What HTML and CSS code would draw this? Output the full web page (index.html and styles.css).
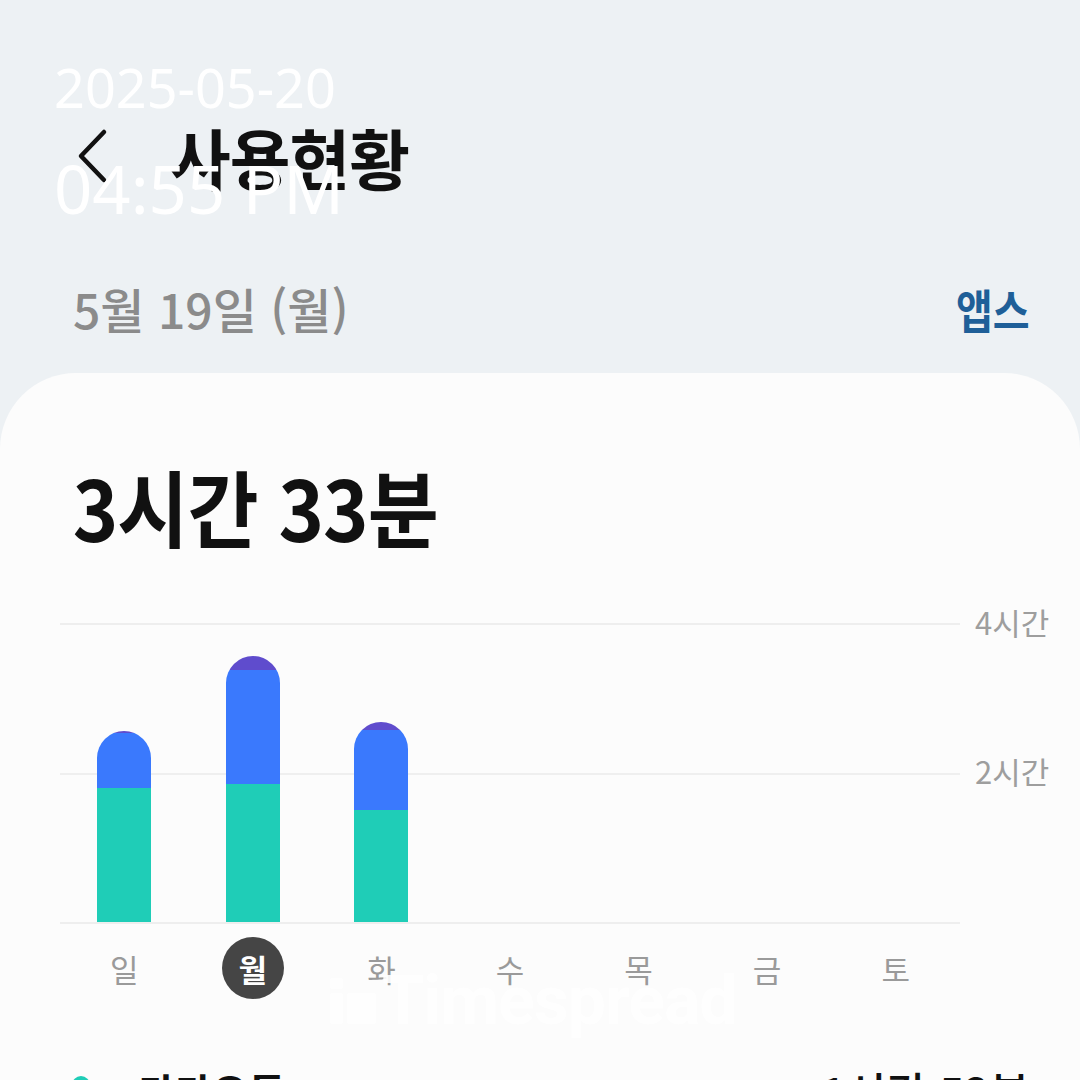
FILE: index.html
```html
<!DOCTYPE html>
<html lang="ko">
<head>
<meta charset="utf-8">
<title>사용현황</title>
<link rel="stylesheet" href="styles.css">
</head>
<body>
<div class="screen">
  <div class="stamp">
    <div class="stamp-date">2025-05-20</div>
    <div class="stamp-time">04:55 PM</div>
  </div>

  <header class="appbar">
    <svg class="back" width="34" height="56" viewBox="0 0 34 56">
      <path d="M28 4 L5 28 L28 52" fill="none" stroke="#111" stroke-width="4.5" stroke-linecap="round" stroke-linejoin="round"/>
    </svg>
    <h1 class="title">사용현황</h1>
  </header>

  <div class="dayline">
    <span class="day-date">5월 19일 (월)</span>
    <span class="apps">앱스</span>
  </div>

  <section class="card">
    <div class="total">3시간 33분</div>

    <div class="chart">
      <div class="plot">
        <div class="bars">
          <div class="col"><div class="bar">
            <div class="seg purple" style="height:2px"></div>
            <div class="seg blue" style="height:55px"></div>
            <div class="seg teal" style="height:134px"></div>
          </div></div>
          <div class="col"><div class="bar">
            <div class="seg purple" style="height:14px"></div>
            <div class="seg blue" style="height:114px"></div>
            <div class="seg teal" style="height:138px"></div>
          </div></div>
          <div class="col"><div class="bar">
            <div class="seg purple" style="height:8px"></div>
            <div class="seg blue" style="height:80px"></div>
            <div class="seg teal" style="height:112px"></div>
          </div></div>
          <div class="col"></div>
          <div class="col"></div>
          <div class="col"></div>
          <div class="col"></div>
        </div>
      </div>
      <div class="axis">
        <span class="tick top">4시간</span>
        <span class="tick mid">2시간</span>
      </div>
    </div>

    <div class="days">
      <span class="day">일</span>
      <span class="day"><span class="today">월</span></span>
      <span class="day">화</span>
      <span class="day">수</span>
      <span class="day">목</span>
      <span class="day">금</span>
      <span class="day">토</span>
    </div>

    <div class="watermark">
      <svg width="46" height="46" viewBox="0 0 46 46">
        <rect x="0" y="0" width="13" height="11" rx="2" fill="#fff"/>
        <rect x="0" y="15" width="13" height="31" rx="2" fill="#fff"/>
        <rect x="17" y="15" width="29" height="31" rx="2" fill="#fff"/>
      </svg>
      <span>Timespread</span>
    </div>

    <div class="app-row">
      <span class="dot"></span>
      <span class="app-name">카카오톡</span>
      <span class="app-time">1시간 52분</span>
    </div>
  </section>
</div>
</body>
</html>
```

FILE: styles.css
```css
html, body{
    margin: 0;
    padding: 0;
}
body{
    background: #edf1f4;
    font-family: "Noto Sans CJK KR", "Noto Sans", sans-serif;
    color: #111;
}
.screen{
    position: relative;
    width: 1080px;
    height: 1080px;
    overflow: hidden;
}

/* photo timestamp burned over the screenshot */
.stamp{
    position: absolute;
    top: 60px;
    left: 54px;
    z-index: 5;
    color: #fff;
    font-family: "Noto Sans", sans-serif;
    line-height: 1;
}
.stamp-date{
    font-size: 54px;
}
.stamp-time{
    margin-top: 41px;
    font-size: 67px;
}

.appbar{
    display: flex;
    align-items: center;
    padding: 118px 0 0 76px;
    height: 76px;
}
.back{
    display: block;
}
.title{
    margin: 0 0 0 60px;
    font-size: 66px;
    font-weight: 700;
    line-height: 1;
    letter-spacing: -1px;
}

.dayline{
    display: flex;
    justify-content: space-between;
    align-items: center;
    padding: 0 50px 0 73px;
    margin-top: 84px;
    height: 60px;
}
.day-date{
    font-size: 48px;
    font-weight: 500;
    color: #8b8b8b;
}
.apps{
    font-size: 46px;
    font-weight: 700;
    color: #1f5f98;
    transform: scaleX(.87);
    transform-origin: right center;
}

.card{
    position: relative;
    margin-top: 35px;
    height: 760px;
    background: #fcfcfc;
    border-radius: 76px 76px 0 0;
}

.total{
    padding: 91px 0 0 79px;
    font-size: 84px;
    font-weight: 700;
    line-height: 1;
    letter-spacing: -1px;
    transform: scaleX(.92);
    transform-origin: left center;
}

.chart{
    display: flex;
    margin: 75px 0 0 60px;
}
.plot{
    width: 900px;
    height: 297px;
    border-top: 2px solid #eeeeee;
    border-bottom: 2px solid #eeeeee;
    background: linear-gradient(#efefef, #efefef) center / 100% 2px no-repeat;
}
.bars{
    display: grid;
    grid-template-columns: repeat(7, 1fr);
    align-items: end;
    justify-items: center;
    height: 100%;
}
.bar{
    display: flex;
    flex-direction: column;
    width: 54px;
    border-radius: 27px 27px 0 0;
    overflow: hidden;
}
.seg.purple{ background: #5f4ccd; }
.seg.blue{ background: #3a79fd; }
.seg.teal{ background: #1fcdb7; }

.axis{
    display: flex;
    flex-direction: column;
    padding-left: 15px;
    color: #9e9e9e;
    font-size: 31px;
    line-height: 30px;
}
.tick.top{
    margin-top: -16px;
}
.tick.mid{
    margin-top: 119px;
}

.days{
    display: grid;
    grid-template-columns: repeat(7, 1fr);
    width: 900px;
    margin: 13px 0 0 60px;
    height: 62px;
    align-items: center;
    justify-items: center;
    font-size: 31px;
    color: #9a9a9a;
}
.today{
    display: flex;
    align-items: center;
    justify-content: center;
    width: 62px;
    height: 62px;
    border-radius: 50%;
    background: #454545;
    color: #fff;
    font-weight: 700;
}

.watermark{
    position: absolute;
    top: 594px;
    left: 330px;
    display: flex;
    align-items: center;
    gap: 6px;
    color: #fff;
    font-family: Roboto, sans-serif;
    font-weight: 700;
    font-size: 68px;
    line-height: 1;
    letter-spacing: -1px;
    opacity: .9;
}

.app-row{
    display: flex;
    align-items: center;
    margin-top: 60px;
    padding: 0 50px 0 72px;
    font-size: 40px;
    font-weight: 700;
}
.dot{
    align-self: flex-start;
    margin-top: 17px;
    width: 18px;
    height: 18px;
    border-radius: 50%;
    background: #1fcdb7;
}
.app-name{
    margin-left: 48px;
}
.app-time{
    margin-left: auto;
    font-size: 44px;
    font-weight: 500;
}
```
